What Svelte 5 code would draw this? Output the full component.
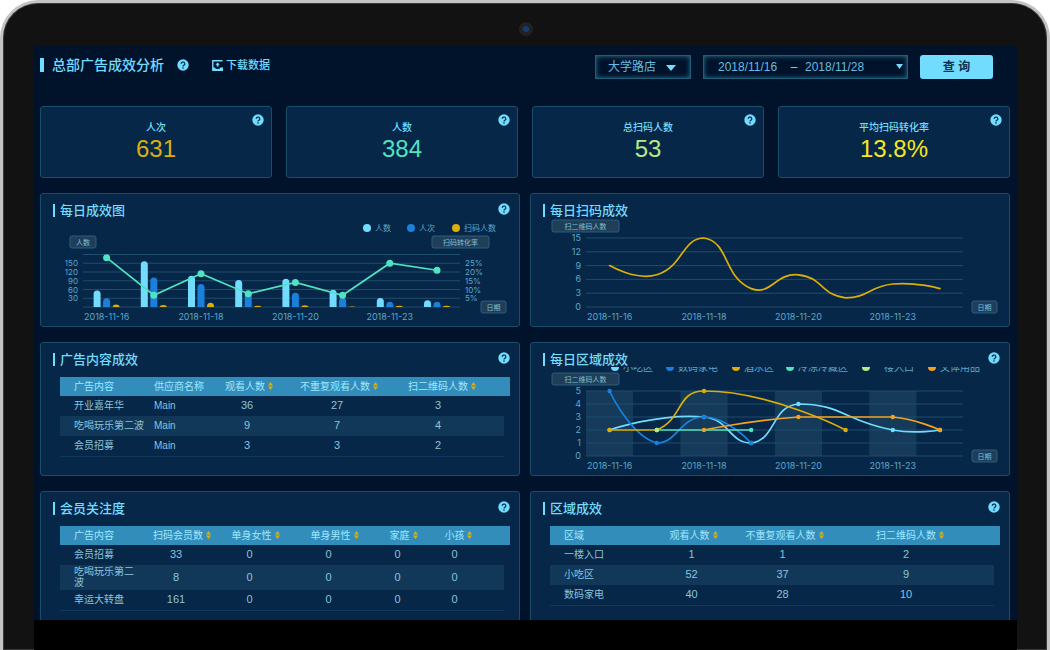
<script lang="ts">
  interface Point {
    x: number;
    y: number;
  }

  interface Column {
    label: string;
    width: number;
    numeric?: boolean;
  }

  interface LegendItem {
    label: string;
    color: string;
    x: number;
  }

  const CYAN = '#72dcff';
  const BLUE = '#1a80dc';
  const GOLD = '#dcae0a';
  const TEAL = '#4fe3c1';
  const LIME = '#b8e986';
  const ORANGE = '#f5a11f';

  const BAND = 47.2;
  const BASE = 89;

  let store = $state('大学路店');
  let startDate = $state('2018/11/16');
  let endDate = $state('2018/11/28');

  const stats = [
    { label: '人次', value: '631', color: '#dcae0a' },
    { label: '人数', value: '384', color: '#4fe3c1' },
    { label: '总扫码人数', value: '53', color: '#b8e986' },
    { label: '平均扫码转化率', value: '13.8%', color: '#f8e71c' },
  ];

  const dates = [
    { label: '2018-11-16', index: 0 },
    { label: '2018-11-18', index: 2 },
    { label: '2018-11-20', index: 4 },
    { label: '2018-11-23', index: 6 },
  ];

  // daily result chart
  const daily = [
    { people: 57, visits: 30, scans: 9, rate: 28.2 },
    { people: 157, visits: 101, scans: 7, rate: 6.7 },
    { people: 107, visits: 79, scans: 15, rate: 19 },
    { people: 93, visits: 52, scans: 4, rate: 7.6 },
    { people: 97, visits: 49, scans: 6, rate: 14 },
    { people: 59, visits: 32, scans: 2, rate: 6.7 },
    { people: 31, visits: 18, scans: 4, rate: 25 },
    { people: 23, visits: 18, scans: 4, rate: 21 },
  ];
  const dailyX = (i: number) => 42 + BAND * (i + 0.5);
  const countY = (v: number) => BASE - (v / 30) * 8.75;
  const rateY = (v: number) => BASE - (v / 5) * 8.75;
  const dailyLegend: LegendItem[] = [
    { label: '人数', color: CYAN, x: 326 },
    { label: '人次', color: BLUE, x: 370 },
    { label: '扫码人数', color: GOLD, x: 415 },
  ];

  // scan and region charts share the same plot area
  const plotX = (i: number) => 55 + BAND * (i + 0.5);
  const scanY = (v: number) => BASE - (v / 3) * 13.8;
  const regionY = (v: number) => BASE - v * 13;

  const scans = [9, 7, 15, 4, 7, 2, 5, 4];

  const regions = [
    { color: CYAN, data: [[0, 2], [2, 3], [3, 1], [4, 4], [6, 2], [7, 2]] },
    { color: BLUE, data: [[0, 5], [1, 1], [2, 3], [3, 1]] },
    { color: GOLD, data: [[0, 2], [1, 2], [2, 5], [5, 2]] },
    { color: TEAL, data: [[1, 2], [3, 2]] },
    { color: LIME, data: [[1, 2]] },
    { color: ORANGE, data: [[2, 2], [4, 3], [6, 3], [7, 2]] },
  ].map((s) => ({
    color: s.color,
    points: s.data.map(([i, v]) => ({ x: plotX(i), y: regionY(v) })),
  }));
  const regionLegend: LegendItem[] = [
    { label: '小吃区', color: CYAN, x: 84 },
    { label: '数码家电', color: BLUE, x: 139 },
    { label: '酒水区', color: GOLD, x: 205 },
    { label: '冷冻冷藏区', color: TEAL, x: 259 },
    { label: '一楼入口', color: LIME, x: 335 },
    { label: '文体用品', color: ORANGE, x: 401 },
  ];

  function linePath(points: Point[]) {
    return points.map((p, i) => `${i ? 'L' : 'M'}${p.x} ${p.y}`).join('');
  }

  // bezier through all points, control points kept inside the data range
  function smoothPath(points: Point[]) {
    const ys = points.map((p) => p.y);
    const lo = Math.min(...ys);
    const hi = Math.max(...ys);
    const clamp = (v: number) => Math.min(hi, Math.max(lo, v));
    let d = `M${points[0].x} ${points[0].y}`;
    let out = points[0];
    for (let i = 1; i < points.length; i++) {
      const prev = points[i - 1];
      const p = points[i];
      const next = points[i + 1];
      let inn = p;
      let nextOut = p;
      if (next) {
        const d0 = Math.hypot(p.x - prev.x, p.y - prev.y);
        const d1 = Math.hypot(next.x - p.x, next.y - p.y);
        const r = d1 / (d0 + d1);
        const vx = (next.x - prev.x) * 0.5;
        const vy = (next.y - prev.y) * 0.5;
        inn = { x: p.x - vx * (1 - r), y: clamp(p.y - vy * (1 - r)) };
        nextOut = { x: p.x + vx * r, y: clamp(p.y + vy * r) };
      }
      d += `C${out.x} ${out.y} ${inn.x} ${inn.y} ${p.x} ${p.y}`;
      out = nextOut;
    }
    return d;
  }

  function barPath(x: number, y: number) {
    const r = Math.min(3.5, BASE - y);
    return `M${x} ${BASE}V${y + r}A3.5 ${r} 0 0 1 ${x + 7} ${y + r}V${BASE}Z`;
  }

  // tables
  const contentCols: Column[] = [
    { label: '广告内容', width: 94 },
    { label: '供应商名称', width: 62 },
    { label: '观看人数', width: 66, numeric: true },
    { label: '不重复观看人数', width: 114, numeric: true },
    { label: '扫二维码人数', width: 108, numeric: true },
  ];
  const contentRows = [
    ['开业嘉年华', 'Main', '36', '27', '3'],
    ['吃喝玩乐第二波', 'Main', '9', '7', '4'],
    ['会员招募', 'Main', '3', '3', '2'],
  ];

  const memberCols: Column[] = [
    { label: '广告内容', width: 84 },
    { label: '扫码会员数', width: 76, numeric: true },
    { label: '单身女性', width: 71, numeric: true },
    { label: '单身男性', width: 87, numeric: true },
    { label: '家庭', width: 51, numeric: true },
    { label: '小孩', width: 75, numeric: true },
  ];
  const memberRows = [
    ['会员招募', '33', '0', '0', '0', '0'],
    ['吃喝玩乐第二波', '8', '0', '0', '0', '0'],
    ['幸运大转盘', '161', '0', '0', '0', '0'],
  ];

  const areaCols: Column[] = [
    { label: '区域', width: 110 },
    { label: '观看人数', width: 67, numeric: true },
    { label: '不重复观看人数', width: 115, numeric: true },
    { label: '扫二维码人数', width: 152, numeric: true },
  ];
  const areaRows = [
    ['一楼入口', '1', '1', '2'],
    ['小吃区', '52', '37', '9'],
    ['数码家电', '40', '28', '10'],
  ];
</script>

{#snippet help()}
  <button class="help" aria-label="说明">
    <svg viewBox="0 0 12 12" width="12" height="12">
      <circle cx="6" cy="6" r="5.7" fill="#72dcff" />
      <path
        d="M4.2 4.8a1.8 1.7 0 1 1 2.7 1.4c-.6.4-.9.6-.9 1.2"
        fill="none"
        stroke="#062747"
        stroke-width="1.2"
      />
      <circle cx="6" cy="9" r=".8" fill="#062747" />
    </svg>
  </button>
{/snippet}

{#snippet head(title: string, hasHelp: boolean)}
  <div class="panel-head">
    <h2>{title}</h2>
    {#if hasHelp}{@render help()}{/if}
  </div>
{/snippet}

{#snippet tag(label: string, x: number, y: number, width: number)}
  <rect class="tag" {x} {y} {width} height="12" rx="2" />
  <text class="tag-text" x={x + width / 2} y={y + 9} text-anchor="middle">{label}</text>
{/snippet}

{#snippet dateAxis(pos: (i: number) => number, tagX: number)}
  {#each dates as d}
    <text class="axis" x={pos(d.index)} y="102" text-anchor="middle">{d.label}</text>
  {/each}
  {@render tag('日期', tagX, 83, 25)}
{/snippet}

{#snippet table(cols: Column[], rows: string[][], compact: boolean)}
  <table class:compact>
    <colgroup>
      {#each cols as col}
        <col style="width: {(col.width / 450) * 100}%" />
      {/each}
      <col />
    </colgroup>
    <thead>
      <tr>
        {#each cols as col}
          <th class:numeric={col.numeric}>
            {#if col.numeric}
              <button class="sort">
                {col.label}
                <svg viewBox="0 0 5 8" width="5" height="8">
                  <path d="M2.5 0L5 3.4H0ZM2.5 8L0 4.6H5Z" fill="#dcae0a" />
                </svg>
              </button>
            {:else}
              {col.label}
            {/if}
          </th>
        {/each}
        <td></td>
      </tr>
    </thead>
    <tbody>
      {#each rows as row}
        <tr>
          {#each row as cell, i}
            <td class:numeric={cols[i].numeric}>{cell}</td>
          {/each}
        </tr>
      {/each}
    </tbody>
  </table>
{/snippet}

<div class="device">
  <div class="bezel"><span class="camera"></span></div>

  <main class="screen">
    <header>
      <div class="heading">
        <h1>总部广告成效分析</h1>
        {@render help()}
        <button class="download">
          <svg viewBox="0 0 11 11" width="11" height="11">
            <path d="M10.5.8H.8V10.2H10.5V7.4" fill="none" stroke="#72dcff" stroke-width="1.4" />
            <path d="M1 7.4H2.8Q3.4 9 5.6 9T8.4 7.4H10.5V10.4H1Z" fill="#72dcff" />
            <path d="M5.6 2.4L7.8 4.8H6.5V6.4H4.7V4.8H3.4Z" fill="#72dcff" />
          </svg>
          下载数据
        </button>
      </div>

      <div class="filters">
        <div class="field">
          <select bind:value={store} aria-label="门店">
            <option>大学路店</option>
          </select>
          <svg class="arrow" viewBox="0 0 10 6" width="10" height="6">
            <path d="M0 0H10L5 6Z" fill="#72dcff" />
          </svg>
        </div>
        <div class="field range">
          <input type="text" bind:value={startDate} aria-label="开始日期" />
          <span>–</span>
          <input type="text" bind:value={endDate} aria-label="结束日期" />
          <button class="open" aria-label="选择日期">
            <svg viewBox="0 0 7 6" width="7" height="6">
              <path d="M0 0H7L3.5 5Z" fill="#72dcff" />
            </svg>
          </button>
        </div>
        <button class="query">查 询</button>
      </div>
    </header>

    <section class="stats">
      {#each stats as s}
        <div class="stat">
          <div class="stat-label">{s.label}</div>
          <div class="stat-value" style="color: {s.color}">{s.value}</div>
          {@render help()}
        </div>
      {/each}
    </section>

    <section class="panels">
      <article class="panel">
        {@render head('每日成效图', true)}
        <svg class="chart" viewBox="0 0 478 108">
          {#each dailyLegend as item}
            <circle cx={item.x} cy="10" r="4" fill={item.color} />
            <text class="legend small" x={item.x + 8} y="13">{item.label}</text>
          {/each}
          {@render tag('人数', 29, 18, 26)}
          {@render tag('扫码转化率', 391, 18, 57)}
          {#each [0, 1, 2, 3, 4, 5, 6] as n}
            <line class="grid" x1="42" x2="419" y1={countY(n * 30)} y2={countY(n * 30)} />
          {/each}
          {#each [1, 2, 3, 4, 5] as n}
            <text class="axis small" x="37" y={countY(n * 30) + 3} text-anchor="end">{n * 30}</text>
            <text class="axis small" x="424" y={countY(n * 30) + 3}>{n * 5}%</text>
          {/each}
          {#each daily as d, i}
            <path d={barPath(dailyX(i) - 13, countY(d.people))} fill={CYAN} />
            <path d={barPath(dailyX(i) - 3.5, countY(d.visits))} fill={BLUE} />
            <path d={barPath(dailyX(i) + 6, countY(d.scans))} fill={GOLD} />
          {/each}
          <path
            class="line"
            d={linePath(daily.map((d, i) => ({ x: dailyX(i), y: rateY(d.rate) })))}
            stroke={TEAL}
          />
          {#each daily as d, i}
            <circle cx={dailyX(i)} cy={rateY(d.rate)} r="3.5" fill={TEAL} />
          {/each}
          {@render dateAxis(dailyX, 440)}
        </svg>
      </article>

      <article class="panel">
        {@render head('每日扫码成效', false)}
        <svg class="chart" viewBox="0 0 478 108">
          {#each [0, 1, 2, 3, 4, 5] as n}
            <line class="grid" x1="55" x2="432" y1={scanY(n * 3)} y2={scanY(n * 3)} />
            <text class="axis" x="50" y={scanY(n * 3) + 3} text-anchor="end">{n * 3}</text>
          {/each}
          {@render tag('扫二维码人数', 21, 2, 67)}
          <path
            class="line"
            d={smoothPath(scans.map((v, i) => ({ x: plotX(i), y: scanY(v) })))}
            stroke={GOLD}
          />
          {@render dateAxis(plotX, 441)}
        </svg>
      </article>

      <article class="panel">
        {@render head('广告内容成效', true)}
        {@render table(contentCols, contentRows, false)}
      </article>

      <article class="panel">
        {@render head('每日区域成效', true)}
        <svg class="chart" viewBox="0 0 478 108">
          {#each regionLegend as item}
            <circle cx={item.x} cy="0" r="4" fill={item.color} />
            <text class="legend" x={item.x + 8} y="4">{item.label}</text>
          {/each}
          {#each [0, 2, 4, 6] as n}
            <rect class="split" x={plotX(n) - BAND / 2} y="24" width={BAND} height="65" />
          {/each}
          {#each [0, 1, 2, 3, 4, 5] as n}
            <line class="grid" x1="55" x2="432" y1={regionY(n)} y2={regionY(n)} />
            <text class="axis" x="50" y={regionY(n) + 3} text-anchor="end">{n}</text>
          {/each}
          {@render tag('扫二维码人数', 21, 6, 67)}
          {#each regions as r}
            <path class="line" d={smoothPath(r.points)} stroke={r.color} />
            {#each r.points as p}
              <circle cx={p.x} cy={p.y} r="2.2" fill={r.color} />
            {/each}
          {/each}
          {@render dateAxis(plotX, 441)}
        </svg>
      </article>

      <article class="panel">
        {@render head('会员关注度', true)}
        {@render table(memberCols, memberRows, true)}
      </article>

      <article class="panel">
        {@render head('区域成效', true)}
        {@render table(areaCols, areaRows, false)}
      </article>
    </section>
  </main>
</div>

<style>
  :global(body) {
    background: #fff;
  }

  .device {
    box-sizing: border-box;
    height: 100vh;
    display: flex;
    flex-direction: column;
    padding: 0 30px 0 31px;
    border: 3px solid #c4c4c4;
    border-bottom: none;
    border-radius: 38px 38px 0 0;
    background: #121212;
    box-shadow: inset 0 0 0 1px #3a3a3a;
    font-family: 'Liberation Sans', 'Noto Sans CJK SC', sans-serif;
    color: #72dcff;
  }

  .bezel {
    flex: none;
    height: 43px;
    display: flex;
    justify-content: center;
    padding-top: 19px;
    box-sizing: border-box;
  }

  .camera {
    width: 6px;
    height: 6px;
    border: 4px solid #222;
    border-radius: 50%;
    background: #143c74;
  }

  .screen {
    flex: 1;
    min-height: 0;
    overflow: hidden;
    padding: 0 7px 0 6px;
    background: #00132b;
    border-bottom: 30px solid #000;
  }

  button,
  input,
  select {
    margin: 0;
    padding: 0;
    border: none;
    background: none;
    color: inherit;
    font: inherit;
    cursor: pointer;
  }

  button svg {
    display: block;
  }

  header {
    display: flex;
    justify-content: space-between;
    align-items: flex-start;
    padding: 9px 17px 27px 0;
  }

  .heading {
    display: flex;
    align-items: center;
    height: 20px;
  }

  h1 {
    margin: 0;
    padding-left: 8px;
    border-left: 4px solid #72dcff;
    font-size: 14px;
    line-height: 14px;
    font-weight: 500;
  }

  .heading .help {
    margin: 0 23px 0 13px;
  }

  .download {
    display: flex;
    align-items: center;
    gap: 3px;
    font-size: 11px;
    font-weight: 500;
    line-height: 14px;
  }

  .filters {
    display: flex;
    gap: 12px;
  }

  .field {
    box-sizing: border-box;
    height: 24px;
    display: flex;
    align-items: center;
    position: relative;
    border: 1px solid #1f5d78;
    box-shadow: inset 0 0 5px #2b7391;
    font-size: 12px;
    color: #66bce0;
  }

  select {
    appearance: none;
    width: 94px;
    height: 22px;
    padding-left: 12px;
  }

  .arrow {
    position: absolute;
    right: 14px;
    top: 9px;
    pointer-events: none;
  }

  .range {
    width: 205px;
    padding: 0 4px 0 14px;
    box-sizing: border-box;
  }

  .range input {
    width: 65px;
  }

  .range span {
    width: 22px;
    text-align: center;
    color: #72dcff;
  }

  .open {
    margin-left: auto;
  }

  .query {
    width: 73px;
    height: 24px;
    border-radius: 3px;
    background: #72dcff;
    color: #0b2f50;
    font-size: 12px;
    font-weight: 700;
    line-height: 22px;
  }

  .stats {
    display: grid;
    grid-template-columns: repeat(4, 1fr);
    gap: 14px;
    margin-bottom: 15px;
  }

  .stat,
  .panel {
    position: relative;
    border: 1px solid #1a4c6b;
    border-radius: 3px;
    background: #062747;
  }

  .stat {
    padding: 14px 0;
    text-align: center;
  }

  .stat-label {
    font-size: 10px;
    line-height: 14px;
    font-weight: 500;
  }

  .stat-value {
    font-size: 24px;
    line-height: 28px;
  }

  .stat .help {
    position: absolute;
    top: 7px;
    right: 7px;
  }

  .panels {
    display: grid;
    grid-template-columns: repeat(2, 1fr);
    gap: 15px 10px;
  }

  .panel-head {
    display: flex;
    justify-content: space-between;
    align-items: flex-start;
    height: 15px;
    padding: 9px 9px 0 12px;
  }

  h2 {
    margin: 1px 0 0;
    padding-left: 5px;
    border-left: 2px solid #72dcff;
    font-size: 13px;
    line-height: 13px;
    font-weight: 500;
  }

  .chart {
    display: block;
    width: 100%;
    overflow: hidden;
  }

  .grid {
    stroke: #1f4d6e;
    stroke-width: 1;
  }

  .line {
    fill: none;
    stroke-width: 1.7;
    stroke-linecap: round;
  }

  .split {
    fill: #153a5a;
  }

  .axis {
    font-family: Inter, sans-serif;
    font-size: 9px;
    fill: #5ba8ca;
  }

  .legend {
    font-size: 10px;
    fill: #5ba8ca;
  }

  .axis.small,
  .legend.small {
    font-size: 8px;
  }

  .tag {
    fill: #213e58;
    stroke: #2a5f80;
  }

  .tag-text {
    font-size: 7px;
    fill: #7cc0da;
  }

  table {
    width: calc(100% - 28px);
    margin: 10px 9px 12px 19px;
    table-layout: fixed;
    border-collapse: collapse;
    font-size: 10px;
    line-height: 11px;
    color: #8cc3da;
  }

  th,
  td {
    height: 20px;
    box-sizing: border-box;
    padding: 1px 0 2px;
    text-align: left;
    font-weight: 400;
  }

  thead tr {
    background: #338dbb;
    color: #9fe8ff;
  }

  thead th,
  thead td {
    height: 19px;
  }

  th:first-child,
  td:first-child {
    padding-left: 14px;
    padding-right: 6px;
  }

  .numeric {
    text-align: center;
  }

  td.numeric {
    padding-right: 4px;
    font-size: 11px;
  }

  .compact td.numeric {
    padding-right: 12px;
  }

  th.numeric:nth-last-child(2) {
    padding-right: 16px;
  }

  td.numeric:last-child,
  .compact td.numeric:last-child {
    padding-right: 24px;
  }

  tbody tr:nth-child(even) td {
    background: #123859;
  }

  tbody tr:last-child td {
    border-bottom: 1px solid #123859;
  }

  .sort {
    display: inline-flex;
    align-items: center;
    gap: 3px;
    white-space: nowrap;
  }
</style>
